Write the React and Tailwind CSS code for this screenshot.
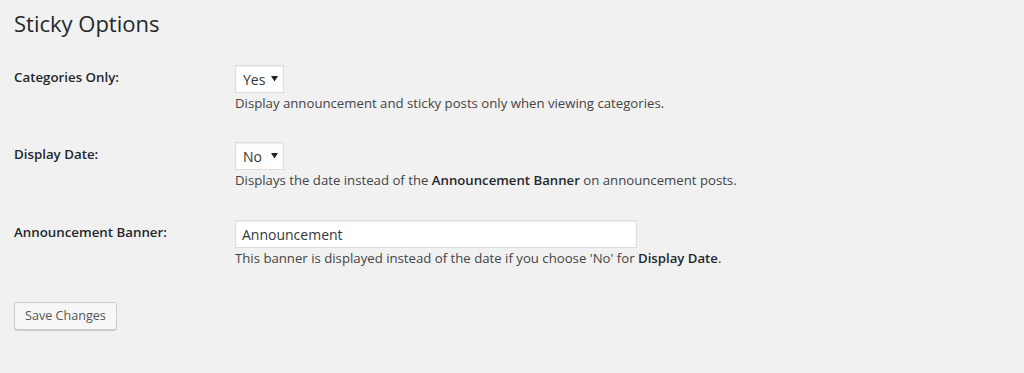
import { useState } from 'react'

function SelectBox({ value, options, onChange }) {
  return (
    <div className="relative inline-block">
      <select
        value={value}
        onChange={(e) => onChange(e.target.value)}
        className="appearance-none h-[28px] bg-white border border-[#ddd] pl-[7px] pr-[17px] text-[14px] text-[#32373c] outline-none shadow-[inset_0_1px_2px_rgba(0,0,0,0.07)]"
      >
        {options.map((o) => (
          <option key={o}>{o}</option>
        ))}
      </select>
      <svg
        className="absolute right-[6px] top-[10px] pointer-events-none"
        width="7"
        height="7"
        viewBox="0 0 7 7"
      >
        <path d="M0 1 L7 1 L3.5 6.5 Z" fill="#222" />
      </svg>
    </div>
  )
}

function App() {
  const [categoriesOnly, setCategoriesOnly] = useState('Yes')
  const [displayDate, setDisplayDate] = useState('No')
  const [banner, setBanner] = useState('Announcement')

  return (
    <div className="min-h-[373px] w-full bg-[#f1f1f1] px-[14px] font-['Open_Sans','Noto_Sans',sans-serif] text-[#23282d]">
      {/* title */}
      <h2 className="pt-[9px] text-[22px] leading-[29px] font-normal">Sticky Options</h2>

      {/* categories only */}
      <div className="flex mt-[27px]">
        <div className="w-[221px] pt-[3px] text-[13.3px] font-semibold">Categories Only:</div>
        <div>
          <SelectBox value={categoriesOnly} options={['Yes', 'No']} onChange={setCategoriesOnly} />
          <p className="text-[13.2px] leading-[20px] text-[#444]">
            Display announcement and sticky posts only when viewing categories.
          </p>
        </div>
      </div>

      {/* display date */}
      <div className="flex mt-[29px]">
        <div className="w-[221px] pt-[3px] text-[13.3px] font-semibold">Display Date:</div>
        <div>
          <SelectBox value={displayDate} options={['Yes', 'No']} onChange={setDisplayDate} />
          <p className="text-[13.2px] leading-[20px] text-[#444]">
            Displays the date instead of the <strong className="font-semibold text-[#23282d]">Announcement Banner</strong> on announcement posts.
          </p>
        </div>
      </div>

      {/* announcement banner */}
      <div className="flex mt-[30px]">
        <div className="w-[221px] pt-[3px] text-[13.3px] font-semibold">Announcement Banner:</div>
        <div>
          <input
            type="text"
            value={banner}
            onChange={(e) => setBanner(e.target.value)}
            className="w-[402px] h-[28px] bg-white border border-[#ddd] px-[6px] text-[14px] text-[#32373c] outline-none shadow-[inset_0_1px_2px_rgba(0,0,0,0.07)]"
          />
          <p className="text-[13.2px] leading-[20px] text-[#444]">
            This banner is displayed instead of the date if you choose 'No' for <strong className="font-semibold text-[#23282d]">Display Date</strong>.
          </p>
        </div>
      </div>

      <button className="mt-[34px] h-[28px] px-[10px] text-[12.6px] text-[#555] bg-[#f7f7f7] border border-[#ccc] rounded-[3px] shadow-[0_1px_0_#ccc]">
        Save Changes
      </button>
    </div>
  )
}

export default App
